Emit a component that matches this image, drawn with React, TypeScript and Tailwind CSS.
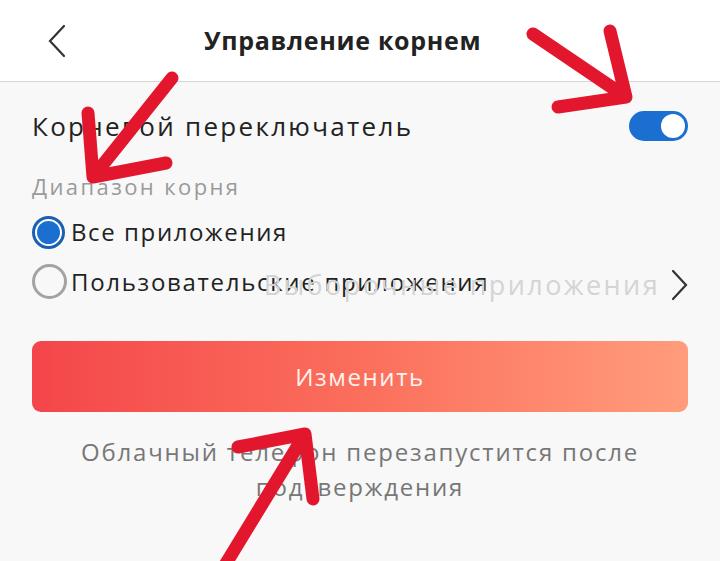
import React from "react";

function Toggle() {
  return (
    <div className="flex h-[30px] w-[59px] items-center justify-end rounded-full bg-[#1b6fd1] px-[3px]">
      <div className="h-[24px] w-[24px] rounded-full bg-white" />
    </div>
  );
}

function Radio({ checked }: { checked: boolean }) {
  if (checked) {
    return (
      <div className="flex h-[33px] w-[33px] shrink-0 items-center justify-center rounded-full border-[3px] border-[#1a5fb0] bg-white">
        <div className="h-[23px] w-[23px] rounded-full bg-[#1b6fd1]" />
      </div>
    );
  }
  return (
    <div className="h-[35px] w-[35px] shrink-0 rounded-full border-[3px] border-[#a3a3a3]" />
  );
}

function Arrows() {
  const c = "#e2172e";
  return (
    <svg
      className="pointer-events-none absolute inset-0"
      width="720"
      height="561"
      viewBox="0 0 720 561"
      fill="none"
      stroke={c}
      strokeWidth="13"
      strokeLinecap="round"
      strokeLinejoin="round"
    >
      {/* top right */}
      <path d="M533 34 L626 97 M610 31 L626 97 L558 107" />
      {/* left */}
      <path d="M172 78 L93 177 M88 113 L93 177 L166 163" />
      {/* bottom */}
      <path d="M222 570 L305 434 M238 447 L305 434 L313 499" />
    </svg>
  );
}

export default function App() {
  return (
    <div className="relative h-[561px] w-[720px] overflow-hidden bg-[#f8f8f8] font-['Open_Sans',sans-serif] text-[#222]">
      <div className="flex h-[82px] items-center border-b border-[#d6d6d6] bg-white pl-[48px]">
        <svg width="18" height="34" viewBox="0 0 18 34" fill="none" stroke="#333" strokeWidth="2.2" strokeLinecap="round">
          <path d="M16 2 L2 17 L16 32" />
        </svg>
        <div className="ml-[138px] text-[25px] font-bold tracking-[0.7px] text-[#222]">
          Управление корнем
        </div>
      </div>

      <div className="px-[32px]">
        <div className="mt-[26px] flex items-center justify-between">
          <span className="text-[26px] leading-[36px] tracking-[2.3px]">Корневой переключатель</span>
          <Toggle />
        </div>

        <div className="mt-[27px] text-[22px] leading-[30px] tracking-[2.4px] text-[#9a9a9a]">Диапазон корня</div>

        <div className="mt-[14px] flex items-center">
          <Radio checked />
          <span className="ml-[6px] text-[24px] leading-[34px] tracking-[1.6px]">Все приложения</span>
        </div>

        <div className="relative mt-[15px] flex items-center">
          <Radio checked={false} />
          <span className="ml-[4px] text-[24px] leading-[34px] tracking-[1.7px]">Пользовательские приложения</span>
          <div className="absolute right-0 top-[4px] flex items-center gap-[10px]">
            <span className="text-[27px] leading-[34px] tracking-[2.4px] text-[#d4d4d4]">Выборочные приложения</span>
            <svg width="18" height="32" viewBox="0 0 18 32" fill="none" stroke="#333" strokeWidth="2.2" strokeLinecap="round">
              <path d="M3 2 L16 16 L3 30" />
            </svg>
          </div>
        </div>

        <button className="mt-[42px] flex h-[71px] w-full items-center justify-center rounded-[9px] bg-gradient-to-r from-[#f4454a] via-[#fb6e5c] to-[#ff9c7c] text-[24px] tracking-[1.6px] text-[#fff3ee]">
          Изменить
        </button>

        <p className="mt-[22px] text-center text-[24px] leading-[35px] tracking-[1.8px] text-[#777]">
          Облачный телефон перезапустится после
          <br />
          подтверждения
        </p>
      </div>

      <Arrows />
    </div>
  );
}
